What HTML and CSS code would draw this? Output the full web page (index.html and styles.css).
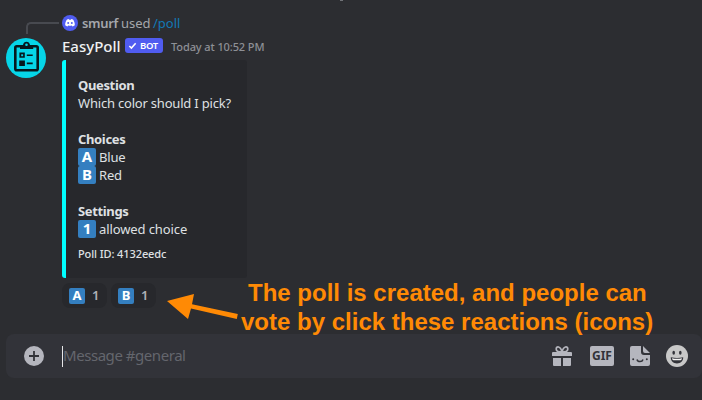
FILE: index.html
```html
<!DOCTYPE html>
<html lang="en">
<head>
<meta charset="utf-8">
<title>EasyPoll</title>
<link rel="stylesheet" href="styles.css">
</head>
<body>
<main class="chat">
  <article class="message">
    <div class="gutter">
      <div class="spine"></div>
      <svg class="avatar" viewBox="0 0 40 40">
        <circle cx="20" cy="20" r="20" fill="#06d5e8"/>
        <rect x="9.300" y="8.200" width="22.400" height="24" rx="1.500" fill="none" stroke="#06181d" stroke-width="2.600"/>
        <path d="M14 11V7h3c.4-4.500 6.600-4.500 7 0h3.200v4z" fill="#06181d"/>
        <circle cx="20.500" cy="6.800" r="1.300" fill="#06d5e8"/>
        <path d="M13.400 14.600h5.400v5.200h-5.400zM13.200 22.600h5.700v5.500h-5.700z" fill="#06181d"/>
        <path d="M15.200 16.300h1.900v1.900h-1.900z" fill="#06d5e8"/>
        <path d="M20.800 17.300h5.900M20.800 25.400h5.900" stroke="#06181d" stroke-width="1.600"/>
      </svg>
    </div>
    <div class="body">
      <div class="reply">
        <svg class="reply-avatar" viewBox="0 0 16 16">
          <circle cx="8" cy="8" r="8" fill="#505cf0"/>
          <path d="M5 4.600 6.700 4l.5.700h1.600l.5-.700 1.700.600c1.300 1.800 1.900 3.700 1.800 5.600-.7.600-1.500 1-2.300 1.200l-.7-1c-1.200.3-2.400.3-3.600 0l-.7 1c-.8-.2-1.600-.6-2.300-1.200C3.100 8.300 3.700 6.400 5 4.600z" fill="#fff"/>
          <circle cx="6.200" cy="8.100" r="1" fill="#505cf0"/><circle cx="9.800" cy="8.100" r="1" fill="#505cf0"/>
        </svg>
        <span class="reply-name">smurf</span><span class="reply-verb">used</span><span class="reply-command">/poll</span>
      </div>
      <header class="author">
        <span class="name">EasyPoll</span>
        <span class="tag"><svg viewBox="0 0 10 10"><path d="M1.500 5.500 3.800 7.800 8.500 2.500" fill="none" stroke="#fff" stroke-width="1.700"/></svg><span>BOT</span></span>
        <time class="time">Today at 10:52 PM</time>
      </header>
      <section class="embed">
        <div class="group">
          <h3>Question</h3>
          <p class="question">Which color should I pick?</p>
        </div>
        <div class="group">
          <h3>Choices</h3>
          <p><b class="emoji">A</b><span>Blue</span></p>
          <p><b class="emoji">B</b><span>Red</span></p>
        </div>
        <div class="group">
          <h3>Settings</h3>
          <p><b class="emoji">1</b><span class="allowed">allowed choice</span></p>
        </div>
        <footer>Poll ID: 4132eedc</footer>
      </section>
      <div class="reactions">
        <div class="reaction"><b class="emoji small">A</b><span>1</span></div>
        <div class="reaction"><b class="emoji small">B</b><span>1</span></div>
      </div>
    </div>
  </article>
  <div class="composer">
    <svg class="plus" viewBox="0 0 20 20"><circle cx="10" cy="10" r="10" fill="#b5b6be"/><path d="M10 5v10M5 10h10" stroke="#323339" stroke-width="1.800"/></svg>
    <div class="field">Message #general</div>
    <div class="tools">
      <svg class="gift" viewBox="0 0 20 20"><g fill="#b5b6be"><path d="M1 6h18q1 0 1 1v3H0V7q0-1 1-1zM1 12h8v8H2q-1 0-1-1zM11 12h8v7q0 1-1 1h-7z"/></g><path d="M10 6C8.500-.2 4.200 0 4.200 2.900 4.200 5 6.500 6 10 6zM10 6c1.500-6.200 5.800-6 5.800-3.100C15.800 5 13.500 6 10 6z" fill="none" stroke="#b5b6be" stroke-width="1.700"/></svg>
      <div class="gif">GIF</div>
      <svg class="sticker" viewBox="0 0 20 20"><path d="M2 0h9v6q0 3 3 3h6v9q0 2-2 2H2q-2 0-2-2V2q0-2 2-2zM13 0l7 7h-5q-2 0-2-2z" fill="#b5b6be"/><g fill="#323339"><circle cx="3.200" cy="13.200" r="1"/><circle cx="16.800" cy="13.200" r="1"/></g><path d="M7 13.500c.8 2.800 5.200 2.800 6 0" fill="none" stroke="#323339" stroke-width="1.500"/></svg>
      <svg class="smile" viewBox="0 0 22 22"><circle cx="11" cy="11" r="11" fill="#c8c8c8"/><g fill="#323339"><ellipse cx="7.700" cy="7.700" rx="1.300" ry="2"/><ellipse cx="14.300" cy="7.700" rx="1.300" ry="2"/><path d="M4.800 12.200c4 1 8.400 1 12.400 0 .2 3.500-2.600 6.200-6.200 6.200s-6.400-2.700-6.200-6.200z"/></g><path d="M6 13.300c3.300.7 6.700.7 10 0-.2 1.300-.8 1.900-1.400 1.900H7.400c-.7 0-1.200-.6-1.400-1.900z" fill="#f3f3f3"/></svg>
    </div>
  </div>
  <div class="edge"></div>
  <aside class="note">
    <svg class="arrow" viewBox="0 0 75 30"><path d="M1 7 28 0l-2 10.200 45.800 9.800-1 5L25 14.500 22 25z" fill="#ff8a05"/></svg>
    <p><span class="line-one">The poll is created, and people can</span><span class="line-two">vote by click these reactions (icons)</span></p>
  </aside>
</main>
</body>
</html>
```
FILE: styles.css
```css
* { box-sizing: border-box; }
body { margin: 0; background: #2c2d31; color: #dfe0e3; font: 13px/18px "Noto Sans", sans-serif; }
h3, p { margin: 0; }
span { white-space: nowrap; }
.chat { position: relative; width: 702px; height: 400px; overflow: hidden; }
.message { display: flex; height: 334px; padding: 14px 0 0 6px; }
.gutter { width: 56px; }
.spine { width: 33px; height: 12px; margin: 8px 0 4px 20px; border: solid #484a50; border-width: 2px 0 0 2px; border-radius: 5px 0 0; }
.avatar { display: block; width: 40px; height: 40px; }
.reply { display: flex; align-items: center; height: 18px; color: #a5a7ac; }
.reply-avatar { width: 16px; height: 16px; margin-right: 4px; }
.reply-name { width: 39px; font-weight: 600; letter-spacing: -.35px; }
.reply-verb { width: 32px; }
.reply-command { color: #1279b5; }
.author { display: flex; align-items: center; height: 28px; }
.name { width: 63px; font-size: 15px; font-weight: 500; letter-spacing: 0; color: #f0f1f3; }
.tag { display: flex; align-items: center; width: 38px; height: 15px; margin-top: -2px; padding-left: 3px; border-radius: 3px; background: #505cf0; color: #fff; font-size: 9.5px; font-weight: 600; line-height: 15px; letter-spacing: -.3px; }
.tag svg { width: 9px; height: 9px; margin-right: 3px; }
.time { margin: 2px 0 0 8px; color: #8e9096; font-size: 11px; font-weight: 500; letter-spacing: -.1px; white-space: nowrap; }
.embed { width: 185px; height: 218px; padding: 16px 12px 0; border-left: 4px solid #00ffff; border-radius: 3px; background: #27282c; }
.group { margin-bottom: 18px; }
.group:nth-child(3) { margin-bottom: 7px; }
.embed h3 { font-size: 13px; font-weight: 700; letter-spacing: -.35px; }
.embed p { display: flex; height: 18px; white-space: nowrap; letter-spacing: -.2px; }
.embed .allowed { letter-spacing: -.1px; }
.emoji { width: 18px; height: 18px; margin-right: 3px; border-radius: 2px; background: #347fc0; color: #fff; font: 700 15px/17px "Noto Sans", sans-serif; letter-spacing: 0; text-align: center; }
.embed footer { font-size: 11px; font-weight: 500; letter-spacing: -.1px; white-space: nowrap; }
.reactions { display: flex; gap: 4px; margin-top: 5px; }
.reaction { display: flex; align-items: center; width: 45px; height: 25px; padding-left: 7px; border-radius: 8px; background: #27282c; color: #b0b2b7; font-weight: 600; }
.reaction > span { margin-top: -1px; }
.small { width: 16px; height: 16px; margin-right: 7px; font-size: 13px; line-height: 15px; }
.composer { display: flex; align-items: center; width: 696px; height: 44px; margin-left: 6px; padding: 0 14px 0 18px; border-radius: 8px; background: #323339; }
.plus { width: 20px; height: 20px; margin-right: 18px; }
.field { height: 21px; border-left: 1px solid #e6e6e8; color: #64666d; font-size: 15px; line-height: 19px; letter-spacing: -.45px; }
.tools { display: flex; align-items: center; margin-left: auto; }
.gift { width: 20px; height: 20px; margin-right: 18px; }
.gif { width: 24px; height: 20px; margin-right: 16px; border-radius: 2px; background: #b5b6be; color: #323339; font: 700 12px/20px "Noto Sans", sans-serif; text-align: center; }
.sticker { width: 20px; height: 20px; margin-right: 16px; }
.smile { width: 22px; height: 22px; }
.edge { position: absolute; left: 340px; top: 0; width: 3px; height: 1px; background: #707277; }
.note { position: absolute; left: 166px; top: 278px; display: flex; color: #ff8a05; font: 700 24px/29px "Liberation Sans", sans-serif; }
.arrow { width: 75px; height: 30px; margin-top: 16px; }
.note span { display: block; }
.line-one { padding-left: 7px; }
```
